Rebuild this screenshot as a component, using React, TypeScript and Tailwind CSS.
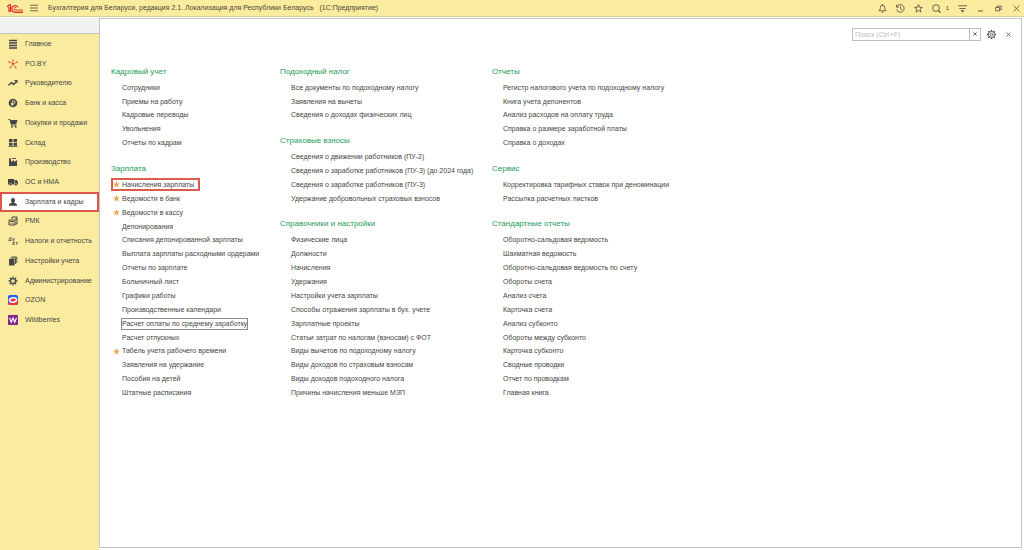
import type { ReactNode } from 'react';

type Item = { label: string; star?: boolean; boxed?: boolean; focused?: boolean };
type Group = { title: string; items: Item[] };

const t = (...labels: string[]): Item[] => labels.map((label) => ({ label }));

const columns: Group[][] = [
  [
    {
      title: 'Кадровый учет',
      items: t('Сотрудники', 'Приемы на работу', 'Кадровые переводы', 'Увольнения', 'Отчеты по кадрам'),
    },
    {
      title: 'Зарплата',
      items: [
        { label: 'Начисления зарплаты', star: true, boxed: true },
        { label: 'Ведомости в банк', star: true },
        { label: 'Ведомости в кассу', star: true },
        ...t(
          'Депонирования',
          'Списания депонированной зарплаты',
          'Выплата зарплаты расходными ордерами',
          'Отчеты по зарплате',
          'Больничный лист',
          'Графики работы',
          'Производственные календари',
        ),
        { label: 'Расчет оплаты по среднему заработку', focused: true },
        { label: 'Расчет отпускных' },
        { label: 'Табель учета рабочего времени', star: true },
        ...t('Заявления на удержание', 'Пособия на детей', 'Штатные расписания'),
      ],
    },
  ],
  [
    {
      title: 'Подоходный налог',
      items: t('Все документы по подоходному налогу', 'Заявления на вычеты', 'Сведения о доходах физических лиц'),
    },
    {
      title: 'Страховые взносы',
      items: t(
        'Сведения о движении работников (ПУ-2)',
        'Сведения о заработке работников (ПУ-3) (до 2024 года)',
        'Сведения о заработке работников (ПУ-3)',
        'Удержание добровольных страховых взносов',
      ),
    },
    {
      title: 'Справочники и настройки',
      items: t(
        'Физические лица',
        'Должности',
        'Начисления',
        'Удержания',
        'Настройки учета зарплаты',
        'Способы отражения зарплаты в бух. учете',
        'Зарплатные проекты',
        'Статьи затрат по налогам (взносам) с ФОТ',
        'Виды вычетов по подоходному налогу',
        'Виды доходов по страховым взносам',
        'Виды доходов подоходного налога',
        'Причины начисления меньше МЗП',
      ),
    },
  ],
  [
    {
      title: 'Отчеты',
      items: t(
        'Регистр налогового учета по подоходному налогу',
        'Книга учета депонентов',
        'Анализ расходов на оплату труда',
        'Справка о размере заработной платы',
        'Справка о доходах',
      ),
    },
    {
      title: 'Сервис',
      items: t('Корректировка тарифных ставок при деноминации', 'Рассылка расчетных листков'),
    },
    {
      title: 'Стандартные отчеты',
      items: t(
        'Оборотно-сальдовая ведомость',
        'Шахматная ведомость',
        'Оборотно-сальдовая ведомость по счету',
        'Обороты счета',
        'Анализ счета',
        'Карточка счета',
        'Анализ субконто',
        'Обороты между субконто',
        'Карточка субконто',
        'Сводные проводки',
        'Отчет по проводкам',
        'Главная книга',
      ),
    },
  ],
];

function Glyph({ children, className = 'size-[10px]' }: { children: ReactNode; className?: string }) {
  return (
    <svg viewBox="0 0 20 20" className={className} fill="none" stroke="currentColor" strokeWidth="1.8" aria-hidden="true">
      {children}
    </svg>
  );
}

const gearTeeth = 'M10 1v4M10 15v4M1 10h4M15 10h4M3.6 3.6l2.9 2.9M13.5 13.5l2.9 2.9M3.6 16.4l2.9-2.9M13.5 6.5l2.9-2.9';

const sections: { label: string; icon: ReactNode; active?: boolean }[] = [
  { label: 'Главное', icon: <Glyph><path d="M2 3h16M2 8h16M2 13h16M2 18h16" strokeWidth="2.6" /></Glyph> },
  {
    label: 'PO.BY',
    icon: (
      <Glyph>
        <g stroke="#e0603c" strokeWidth="1.6">
          <path d="M10 10V3M10 10l7-3M10 10l5 7M10 10l-5 7M10 10L3 6" />
          <g fill="#e0603c" stroke="none">
            <circle cx="10" cy="2.5" r="1.6" /><circle cx="17.5" cy="6.5" r="1.8" /><circle cx="15.5" cy="17" r="1.8" />
            <circle cx="4.5" cy="17" r="1.8" /><circle cx="2.5" cy="6" r="1.8" /><circle cx="10" cy="10" r="2.4" />
          </g>
        </g>
      </Glyph>
    ),
  },
  { label: 'Руководителю', icon: <Glyph><path d="M1 15l6-6 4 4 6-6" strokeWidth="2.6" /><path d="M12 4h7v7z" fill="currentColor" stroke="none" /></Glyph> },
  {
    label: 'Банк и касса',
    icon: (
      <Glyph>
        <circle cx="10" cy="10" r="8.6" fill="currentColor" stroke="none" />
        <path d="M8.5 16V5.5h3a2.7 2.7 0 010 5.4H6M6 13.3h5.5" stroke="#fbeb9e" strokeWidth="1.7" />
      </Glyph>
    ),
  },
  {
    label: 'Покупки и продажи',
    icon: (
      <Glyph>
        <path d="M1 3h3l3 11h10" strokeWidth="2" />
        <path d="M4 4h15l-2.5 8H6.5z" fill="currentColor" stroke="none" />
        <circle cx="8" cy="17.5" r="1.9" fill="currentColor" stroke="none" /><circle cx="15.5" cy="17.5" r="1.9" fill="currentColor" stroke="none" />
      </Glyph>
    ),
  },
  {
    label: 'Склад',
    icon: <Glyph><path d="M2 2h7v6.5H2zM11 2h7v6.5h-7zM2 10h7v5.5H2zM11 10h7v5.5h-7zM1 16.6h18v1.6H1z" fill="currentColor" stroke="none" /></Glyph>,
  },
  {
    label: 'Производство',
    icon: <Glyph><path d="M2 18V3h4v7l6-4v4l6-4v12z" fill="currentColor" stroke="none" /><path d="M8 3h8" strokeWidth="1.8" /></Glyph>,
  },
  {
    label: 'ОС и НМА',
    icon: (
      <Glyph>
        <path d="M0 4h12v11H0zM13 6h4l3 4v5h-7z" fill="currentColor" stroke="none" />
        <circle cx="5" cy="15" r="2.5" fill="currentColor" stroke="#fbeb9e" strokeWidth="1" /><circle cx="15.5" cy="15" r="2.5" fill="currentColor" stroke="#fbeb9e" strokeWidth="1" />
      </Glyph>
    ),
  },
  {
    label: 'Зарплата и кадры',
    active: true,
    icon: <Glyph><path d="M10 2a4 4.3 0 014 4.3c0 2-.9 3.3-2 4.1 0 1.6 6 1.8 6 5.6v1.5H2V16c0-3.8 6-4 6-5.6-1.1-.8-2-2.1-2-4.1A4 4.3 0 0110 2z" fill="currentColor" stroke="none" /></Glyph>,
  },
  {
    label: 'РМК',
    icon: <Glyph><path d="M8 6V2h10v4M2 8h12v10H2zM14 6h4v10h-4" strokeWidth="2" /><path d="M4.5 11h7M5 14.5h2M9 14.5h2" strokeWidth="2" /></Glyph>,
  },
  {
    label: 'Налоги и отчетность',
    icon: <Glyph><path d="M2 9l2-6h2v6M1 9h6M9 4l2 6M13 4l-2.5 7" strokeWidth="1.4" /><path d="M10 12v6M10 15l4-3M10 15l4 3M15 13h5M17.5 13v5" strokeWidth="1.4" /></Glyph>,
  },
  {
    label: 'Настройки учета',
    icon: <Glyph><path d="M2 6h11v13H2z" fill="currentColor" stroke="none" /><path d="M4.5 4.2H15V16M7 2h10.5v12" strokeWidth="1.8" /></Glyph>,
  },
  {
    label: 'Администрирование',
    icon: <Glyph><circle cx="10" cy="10" r="4.8" strokeWidth="2.4" /><path d={gearTeeth} strokeWidth="2.6" /></Glyph>,
  },
  {
    label: 'OZON',
    icon: (
      <Glyph>
        <rect width="20" height="20" rx="4" fill="#1b62e8" stroke="none" />
        <path d="M0 15c5 2 13 0 20-5v6a4 4 0 01-4 4H4a4 4 0 01-4-4z" fill="#ee3146" stroke="none" />
        <ellipse cx="10" cy="10" rx="7" ry="4.4" fill="#ee3146" stroke="#fff" strokeWidth="3" transform="rotate(-8 10 10)" />
      </Glyph>
    ),
  },
  {
    label: 'Wildberries',
    icon: (
      <Glyph>
        <rect width="20" height="20" rx="1.5" fill="#83268c" stroke="none" />
        <path d="M3 5.5l3.5 9L10 6l3.5 8.5L17 5.5" stroke="#fff" strokeWidth="2.2" />
      </Glyph>
    ),
  },
];

function Star() {
  return (
    <svg viewBox="0 0 20 20" className="size-[7px]" fill="#eda64b" aria-hidden="true">
      <path d="M10 0l2.7 7H20l-5.8 4.6L16.4 19 10 14.6 3.6 19l2.2-7.4L0 7h7.3z" />
    </svg>
  );
}

function IconButton({ label, children }: { label: string; children: ReactNode }) {
  return (
    <button type="button" aria-label={label} className="flex size-[10px] items-center justify-center">
      {children}
    </button>
  );
}

function TopBar() {
  return (
    <header className="flex h-[17px] shrink-0 items-center border-b border-[#d9cf9f] bg-[#fbeb9e] pr-[3px] pl-[7px] text-[#4a4634]">
      <svg viewBox="0 0 32 18" className="h-[9px] w-[16px]" fill="none" stroke="#dc3b34" strokeWidth="2.6" role="img" aria-label="1C">
        <path d="M0 6l4-4h3v14M4 6v10" />
        <path d="M22 7a6.5 6.5 0 10-6 9.500h16" />
        <path d="M18 7.500a2.500 2.500 0 10-2 4.500h16" strokeWidth="2" />
      </svg>
      <button type="button" aria-label="Главное меню" className="ml-[7px]">
        <Glyph className="size-[8px]"><path d="M0 3h20M0 10h20M0 17h20" strokeWidth="2" /></Glyph>
      </button>
      <h1 className="ml-[10px] text-[7px] leading-[16px] whitespace-pre">
        Бухгалтерия для Беларуси, редакция 2.1. Локализация для Республики Беларусь{'   '}(1С:Предприятие)
      </h1>
      <div className="ml-auto flex items-center gap-[8px]">
        <IconButton label="Уведомления">
          <Glyph className="size-[9px]"><path d="M2 15c2.5-2 3-4 3-7a5 5 0 0110 0c0 3 .5 5 3 7zM8 18h4M10 0v3" /></Glyph>
        </IconButton>
        <IconButton label="История">
          <Glyph className="size-[9px]"><path d="M2 6a8.5 8.5 0 11-.5 6M1 1.5V7h5.5M10 5v5.5l4 2.5" /></Glyph>
        </IconButton>
        <IconButton label="Избранное">
          <Glyph className="size-[9px]"><path d="M10 1.5l2.5 6h6L13.7 11.5l1.8 6.5L10 14.3 4.5 18l1.8-6.5L1.5 7.5h6z" /></Glyph>
        </IconButton>
        <div className="flex items-center gap-[4px]">
          <IconButton label="Поиск">
            <Glyph className="size-[9px]"><circle cx="9" cy="9" r="7.5" /><path d="M14 14l5 5" strokeWidth="2.6" /></Glyph>
          </IconButton>
          <span className="text-[6px]">1</span>
        </div>
        <IconButton label="Сервис и настройки">
          <Glyph className="size-[9px]"><path d="M0 4h20M3 10h14" /><path d="M6 14h8l-4 5z" fill="currentColor" stroke="none" /></Glyph>
        </IconButton>
        <IconButton label="Свернуть">
          <Glyph className="size-[7px]"><path d="M3 17h14" strokeWidth="2.6" /></Glyph>
        </IconButton>
        <IconButton label="Развернуть">
          <Glyph className="size-[7px]"><path d="M2 7h11v10H2zM6 7V3h12v10h-5" strokeWidth="2.2" /></Glyph>
        </IconButton>
        <IconButton label="Закрыть приложение">
          <Glyph className="size-[7px]"><path d="M2 2l16 16M18 2L2 18" strokeWidth="2.2" /></Glyph>
        </IconButton>
      </div>
    </header>
  );
}

function Sidebar() {
  return (
    <nav aria-label="Разделы" className="flex w-[99px] shrink-0 flex-col">
      <div className="h-[16px] border-b border-[#c8c4b4] bg-[#f1f1f1]" />
      <div className="grow bg-[#fbeb9e]">
        <ul className="grid h-[296px] auto-rows-fr">
          {sections.map((s) => (
            <li key={s.label} className="flex">
              <a
                href="#"
                aria-current={s.active ? 'page' : undefined}
                className={
                  s.active
                    ? 'flex grow items-center gap-[7px] border-2 border-[#e0564a] bg-white pl-[6px] text-[#454545]'
                    : 'flex grow items-center gap-[7px] pl-[8px] text-[#454545]'
                }
              >
                {s.icon}
                <span className="text-[7px] leading-[12px] whitespace-nowrap">{s.label}</span>
              </a>
            </li>
          ))}
        </ul>
      </div>
    </nav>
  );
}

function MenuLink({ item }: { item: Item }) {
  const frame = item.boxed
    ? 'flex h-[13px] items-center border-2 border-[#dc5a4e] pr-[4px]'
    : 'flex items-center border-2 border-transparent';
  return (
    <a href="#" className={frame}>
      <span className="flex w-[9px] shrink-0 items-center">{item.star && <Star />}</span>
      <span className={item.focused ? 'leading-[10px] outline outline-[#8a8a8a]' : 'leading-[10px]'}>{item.label}</span>
    </a>
  );
}

function Column({ groups }: { groups: Group[] }) {
  return (
    <div className="grid h-[347px] grid-rows-[repeat(25,minmax(0,1fr))] justify-items-start">
      {groups.map((g) => (
        <section key={g.title} className="contents">
          <h2 className="row-span-2 self-end pb-[3px] text-[8px] leading-[12px] whitespace-nowrap text-[#249a58]">{g.title}</h2>
          <ul className="contents">
            {g.items.map((item) => (
              <li key={item.label} className="flex items-center text-[7px] whitespace-nowrap text-[#454545]">
                <MenuLink item={item} />
              </li>
            ))}
          </ul>
        </section>
      ))}
    </div>
  );
}

export default function App() {
  return (
    <div className="flex min-h-screen flex-col bg-white font-['Liberation_Sans',Arial,sans-serif]">
      <TopBar />
      <div className="flex grow bg-white pt-px">
        <Sidebar />
        <main className="mr-[2px] mb-[2px] grow border border-[#c4c4c4] bg-white">
          <div className="mb-[4px] flex h-[30px] items-center justify-end pr-[10px] text-[#454545]">
            <div className="flex h-[13px] w-[129px] items-stretch border border-[#bdbdbd]">
              <input
                type="text"
                aria-label="Поиск"
                placeholder="Поиск (Ctrl+F)"
                className="min-w-0 grow pt-px pl-[2px] text-[7px] leading-[10px] outline-none placeholder:text-[#bcbcbc]"
              />
              <button type="button" aria-label="Очистить" className="flex w-[11px] items-center justify-center border-l border-[#bdbdbd]">
                <Glyph className="size-[4px]"><path d="M2 2l16 16M18 2L2 18" strokeWidth="4" /></Glyph>
              </button>
            </div>
            <button type="button" aria-label="Настройки" className="ml-[6px]">
              <Glyph className="size-[9px]"><circle cx="10" cy="10" r="3" /><circle cx="10" cy="10" r="7" /><path d="M10 0v3M10 17v3M0 10h3M17 10h3M3 3l2 2M15 15l2 2M3 17l2-2M15 5l2-2" strokeWidth="3" /></Glyph>
            </button>
            <button type="button" aria-label="Закрыть" className="ml-[10px]">
              <Glyph className="size-[5px]"><path d="M2 2l16 16M18 2L2 18" strokeWidth="3" /></Glyph>
            </button>
          </div>
          <div className="grid grid-cols-[169px_212px_1fr] pl-[11px]">
            {columns.map((groups) => (
              <Column key={groups[0].title} groups={groups} />
            ))}
          </div>
        </main>
      </div>
    </div>
  );
}
